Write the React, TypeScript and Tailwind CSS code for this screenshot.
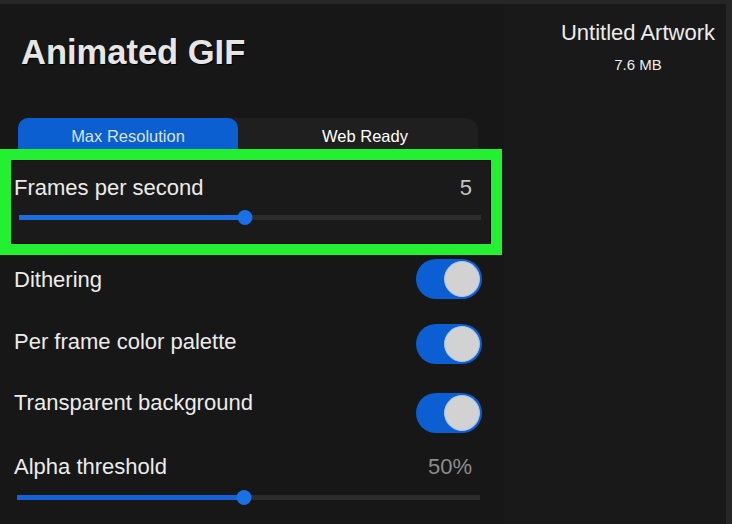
import { useState } from "react";

const font = { fontFamily: '"Liberation Sans", Arial, sans-serif' };

function Slider({ value, fill }: { value: number; fill: string }) {
  return (
    <div className="relative h-[15px] w-full">
      <div className="absolute left-0 right-0 top-[5px] h-[5px] bg-[#2c2c2c]" />
      <div
        className={`absolute left-0 top-[5px] h-[5px] ${fill}`}
        style={{ width: `${value}%` }}
      />
      <div
        className="absolute top-0 h-[15px] w-[15px] -translate-x-1/2 rounded-full bg-[#1a70e6]"
        style={{ left: `${value}%` }}
      />
    </div>
  );
}

function Toggle({ on }: { on: boolean }) {
  return (
    <div
      className={`flex h-[40px] w-[66px] items-center rounded-full px-[2px] ${
        on ? "justify-end bg-[#0b5fd2]" : "justify-start bg-[#3a3a3a]"
      }`}
    >
      <div className="h-[36px] w-[36px] rounded-full border-[1.5px] border-[#a9c7ee] bg-[#d2d2d2]" />
    </div>
  );
}

export default function App() {
  const [tab, setTab] = useState<"max" | "web">("max");
  const [fps] = useState(5);

  return (
    <div
      className="flex h-[524px] w-[732px] flex-col overflow-hidden bg-[#171717] text-[#ececec]"
      style={font}
    >
      <div className="h-[4px] bg-[#262626]" />
      <div className="flex flex-1">
        {/* settings column */}
        <div className="flex w-[504px] flex-col">
          <h1
            className="mt-[31px] pl-[21px] text-[34.5px] font-bold leading-none text-[#e6e6e6]"
            style={{ textShadow: "1px 1px 1px #000" }}
          >
            Animated GIF
          </h1>

          <div className="ml-[18px] mt-[48px] flex h-[31px] w-[460px] rounded-t-[12px] bg-[#1f1f1f] text-[16.5px] leading-none">
            <button
              onClick={() => setTab("max")}
              className={`flex w-[220px] items-center justify-center rounded-t-[10px] pt-[6px] ${
                tab === "max" ? "bg-[#0b5fd0] text-[#d6e4f8]" : "text-white"
              }`}
            >
              Max Resolution
            </button>
            <button
              onClick={() => setTab("web")}
              className={`flex flex-1 items-center justify-center rounded-t-[10px] pl-[14px] pt-[6px] ${
                tab === "web" ? "bg-[#0b5fd0] text-[#d6e4f8]" : "text-white"
              }`}
            >
              Web Ready
            </button>
          </div>

          {/* highlighted row */}
          <div className="h-[106px] w-[502px] border-[11px] border-[#22f030]">
            <div className="h-full border border-[#080808] bg-[#1a1a1a] pl-[2px] pr-[18px] pt-[16px]">
              <div className="flex justify-between text-[22px] leading-none">
                <span>Frames per second</span>
                <span className="text-[#c4c4c4]">{fps}</span>
              </div>
              <div className="mt-[11px] pl-[5px]">
                <div className="w-[462px]">
                  <Slider value={49} fill="bg-[#1a6ee2]" />
                </div>
              </div>
            </div>
          </div>

          <div className="mt-[4px] flex items-start justify-between pl-[14px] pr-[22px]">
            <span className="mt-[10px] text-[22px] leading-none">Dithering</span>
            <Toggle on />
          </div>
          <div className="mt-[25px] flex items-start justify-between pl-[14px] pr-[22px]">
            <span className="mt-[7px] text-[22px] leading-none">Per frame color palette</span>
            <Toggle on />
          </div>
          <div className="mt-[28px] flex items-start justify-between pl-[14px] pr-[22px]">
            <span className="text-[22px] leading-none">Transparent background</span>
            <div className="mt-[1px]">
              <Toggle on />
            </div>
          </div>

          <div className="mt-[23px] flex justify-between pl-[14px] pr-[32px] text-[22px] leading-none">
            <span>Alpha threshold</span>
            <span className="text-[#8c8c8c]">50%</span>
          </div>
          <div className="mt-[12px] pl-[17px] pr-[24px]">
            <Slider value={49} fill="bg-[#1463d6]" />
          </div>
        </div>

        {/* file info */}
        <div className="flex flex-1 justify-end bg-[#191919] pr-[11px]">
          <div className="mt-[18px] flex h-fit flex-col items-center">
            <span className="text-[22px] leading-none">Untitled Artwork</span>
            <span className="mt-[13px] text-[15px] leading-none">7.6 MB</span>
          </div>
        </div>
        <div className="w-[6px] bg-[#262626]" />
      </div>
    </div>
  );
}
